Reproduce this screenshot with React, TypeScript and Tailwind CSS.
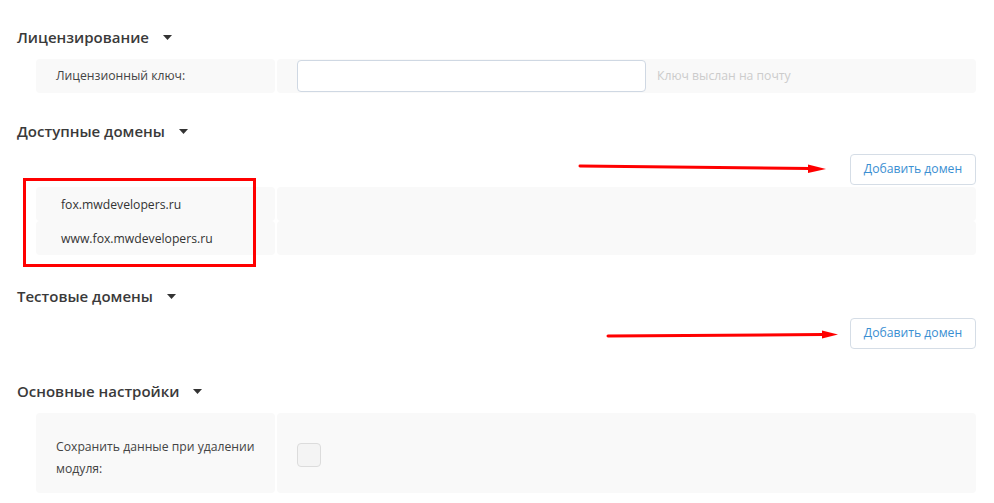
import React from 'react';

const font = { fontFamily: '"Open Sans", "Liberation Sans", sans-serif' };

const Heading = ({ title, className = '' }: { title: string; className?: string }) => (
  <div className={`flex items-center h-5 pl-[17px] ${className}`}>
    <span className="text-[15px] font-semibold text-[#3a3a3a]">{title}</span>
    <svg width="9" height="5" viewBox="0 0 9 5" className="ml-[14px] mt-[1px]">
      <path d="M0 0h9L4.5 5z" fill="#333" />
    </svg>
  </div>
);

const AddButton = () => (
  <button className="h-[31px] w-[126px] rounded border border-[#d5dde6] bg-white text-[12.2px] text-[#3a8fd2]">
    Добавить домен
  </button>
);

const domains = ['fox.mwdevelopers.ru', 'www.fox.mwdevelopers.ru'];

export default function App() {
  return (
    <div className="relative h-[503px] w-[994px] overflow-hidden bg-white" style={font}>
      <div className="pt-[27px]">
        <Heading title="Лицензирование" />
        <div className="mt-3 ml-[36px] grid w-[940px] grid-cols-[239px_1fr] gap-[2px]">
          <div className="flex h-[34px] items-center rounded bg-[#f9f9f9] pl-5 text-[12.2px] text-[#444]">
            Лицензионный ключ:
          </div>
          <div className="flex h-[34px] items-center rounded bg-[#f9f9f9] pl-5">
            <input className="h-8 w-[349px] rounded border border-[#cfd8e3] bg-white outline-none" />
            <span className="ml-[11px] text-[12.2px] text-[#cccccc]">Ключ выслан на почту</span>
          </div>
        </div>

        <Heading title="Доступные домены" className="mt-[28px]" />
        <div className="mt-[13px] flex w-[976px] justify-end">
          <AddButton />
        </div>
        <div className="mt-[2px] ml-[36px] grid w-[940px] grid-cols-[239px_1fr] gap-x-[2px]">
          {domains.map((d) => (
            <React.Fragment key={d}>
              <div className="flex h-[34px] items-center rounded bg-[#f9f9f9] pl-[25px] pt-[2px] text-[12.2px] text-[#333]">
                {d}
              </div>
              <div className="h-[34px] rounded bg-[#f9f9f9]" />
            </React.Fragment>
          ))}
        </div>

        <Heading title="Тестовые домены" className="mt-[31px]" />
        <div className="mt-3 flex w-[976px] justify-end">
          <AddButton />
        </div>

        <Heading title="Основные настройки" className="mt-[32px]" />
        <div className="mt-3 ml-[36px] grid w-[940px] grid-cols-[239px_1fr] gap-[2px]">
          <div className="flex h-20 items-center rounded bg-[#f9f9f9] pl-5 pt-[9px] text-[12.2px] leading-[22px] text-[#444]">
            Сохранить данные при удалении модуля:
          </div>
          <div className="flex h-20 items-center rounded bg-[#f9f9f9] pl-5 pt-[4px]">
            <div className="h-6 w-6 rounded border border-[#dcdcdc] bg-[#f4f4f4]" />
          </div>
        </div>
      </div>

      <svg className="pointer-events-none absolute left-0 top-0" width="994" height="503">
        <rect x="24.5" y="179.5" width="230" height="86" fill="none" stroke="#ff0000" strokeWidth="3" />
        <line x1="580" y1="166" x2="810" y2="168.5" stroke="#ff0000" strokeWidth="3" strokeLinecap="round" />
        <path d="M808 164.5L826 169L808 173z" fill="#ff0000" />
        <line x1="608" y1="336" x2="823" y2="334.5" stroke="#ff0000" strokeWidth="3" strokeLinecap="round" />
        <path d="M822 330.5L838 334.5L822 338.5z" fill="#ff0000" />
      </svg>
    </div>
  );
}
